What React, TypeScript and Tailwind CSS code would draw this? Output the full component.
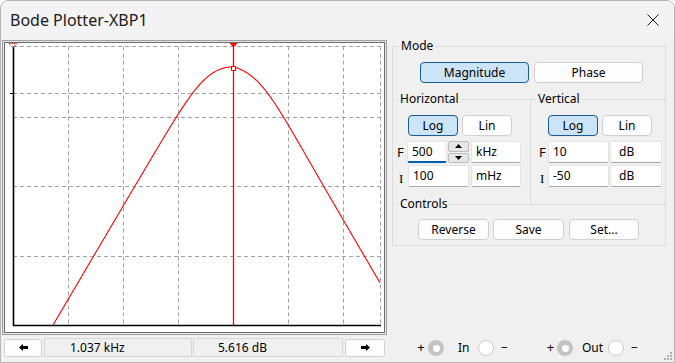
import { FC, ReactNode } from "react";

// plot geometry, in page pixels
const X_AXIS = 13;
const X_RIGHT = 380;
const Y_TOP = 46.5;
const Y_BOTTOM = 325.5;
const X_PEAK = 233;
const PX_PER_DECADE = 54.8;

const decadeLines = [68, 123, 178, 233, 288, 343, 380];
const levelLines = [46.5, 93.5, 117.5, 186.5, 256.5];

const dbToY = (db: number) => Y_TOP + ((10 - db) * (Y_BOTTOM - Y_TOP)) / 60;

// band-pass response, Q ~ 0.31, peak 5.616 dB at the cursor
const magnitudeAt = (x: number) => {
  const u = Math.pow(10, (x - X_PEAK) / PX_PER_DECADE);
  const q = 0.31;
  const r = u / q / Math.sqrt((1 - u * u) ** 2 + (u / q) ** 2);
  let db = 5.616 + 20 * Math.log10(r);
  if (x > X_PEAK) db -= 3 * Math.tanh((x - X_PEAK) / 60);
  return db;
};

const curvePoints = () => {
  const pts: string[] = [];
  for (let x = X_AXIS; x <= X_RIGHT; x += 0.5) {
    const y = dbToY(magnitudeAt(x));
    if (y <= Y_BOTTOM) pts.push(`${x.toFixed(1)},${y.toFixed(2)}`);
  }
  return pts.join(" ");
};

const BodePlot: FC = () => (
  <svg width={379} height={289} viewBox="5 43 379 289" className="block">
    {decadeLines.map((x) => (
      <line key={x} x1={x + 0.5} y1={Y_TOP} x2={x + 0.5} y2={Y_BOTTOM} stroke="#a3a3a3" strokeDasharray="4 3" />
    ))}
    {levelLines.map((y) => (
      <line key={y} x1={X_AXIS} y1={y} x2={X_RIGHT + 1} y2={y} stroke="#a3a3a3" strokeDasharray="4 3" />
    ))}

    {/* axes */}
    <line x1={X_AXIS + 0.5} y1={Y_TOP} x2={X_AXIS + 0.5} y2={Y_BOTTOM + 0.5} stroke="#000" strokeWidth={1.6} />
    <line x1={X_AXIS} y1={Y_BOTTOM} x2={X_RIGHT + 1} y2={Y_BOTTOM} stroke="#000" strokeWidth={1.6} />
    <line x1={10} y1={93.5} x2={X_AXIS} y2={93.5} stroke="#000" />

    <polyline points={curvePoints()} fill="none" stroke="#ff0000" strokeWidth={1.1} />

    {/* cursors */}
    <polygon points="9,43.5 17,43.5 13,48" fill="none" stroke="#ff0000" strokeDasharray="1.5 1" />
    <line x1={233.5} y1={43} x2={233.5} y2={Y_BOTTOM} stroke="#ff0000" strokeWidth={1.3} />
    <polygon points="229.5,43 237.5,43 233.5,47.5" fill="#ff0000" />
    <rect x={231.5} y={66.5} width={4} height={4} fill="#fff" stroke="#ff0000" />
  </svg>
);

const Arrow: FC<{ right?: boolean }> = ({ right }) => (
  <svg width={9} height={7} viewBox="0 0 9 7" className={right ? "rotate-180" : ""}>
    <path d="M0 3.5 L4 0 L4 2 L9 2 L9 5 L4 5 L4 7 Z" fill="#000" />
  </svg>
);

const ToggleButton: FC<{ active?: boolean; className?: string; children: ReactNode }> = ({
  active,
  className,
  children,
}) => (
  <button
    type="button"
    className={`h-[21px] flex items-center justify-center rounded-[4px] border text-[12px] text-black ${
      active ? "bg-[#cce4f7] border-[#1b5b98]" : "bg-[#fdfdfd] border-[#d0d0d0]"
    } ${className ?? ""}`}
  >
    {children}
  </button>
);

const Field: FC<{ value: string; focused?: boolean; className?: string }> = ({ value, focused, className }) => (
  <div
    className={`h-[22px] flex items-center bg-white rounded-[2px] border border-[#e3e3e3] text-[12px] text-black pl-[4px] ${
      focused ? "border-b-2 border-b-[#005fb8]" : "border-b-[#a9a9a9]"
    } ${className ?? ""}`}
  >
    {value}
  </div>
);

const Spinner: FC = () => (
  <div className="w-[21px] h-[22px] ml-[1px] flex flex-col gap-[1px]">
    <div className="flex-1 flex items-center justify-center bg-[#e6e6e6] border border-[#bdbdbd] rounded-[2px]">
      <svg width={7} height={4} viewBox="0 0 7 4">
        <path d="M0 4 L3.5 0 L7 4 Z" fill="#000" />
      </svg>
    </div>
    <div className="flex-1 flex items-center justify-center bg-[#e6e6e6] border border-[#bdbdbd] rounded-[2px]">
      <svg width={7} height={4} viewBox="0 0 7 4">
        <path d="M0 0 L7 0 L3.5 4 Z" fill="#000" />
      </svg>
    </div>
  </div>
);

const Terminal: FC<{ live?: boolean; className?: string }> = ({ live, className }) =>
  live ? (
    <span className={`w-[16px] h-[16px] rounded-full bg-[#c3c3c3] flex items-center justify-center ${className ?? ""}`}>
      <span className="w-[7px] h-[7px] rounded-full bg-white" />
    </span>
  ) : (
    <span className={`w-[16px] h-[16px] rounded-full bg-white border border-[#c9c9c9] ${className ?? ""}`} />
  );

const Legend: FC<{ children: ReactNode; className?: string }> = ({ children, className }) => (
  <legend className={`px-[2px] leading-[16px] text-[12px] text-black ${className ?? "ml-[5px]"}`}>{children}</legend>
);

const App: FC = () => {
  return (
    <div className="relative w-[675px] h-[363px] flex flex-col overflow-hidden bg-[#f0f0f0] border border-[#b5b5b5] rounded-t-[8px] font-['Noto_Sans',sans-serif] text-[#1a1a1a]">
      {/* Title bar */}
      <div className="h-[37px] shrink-0 flex items-center justify-between pl-[9px] pr-[15px] bg-[#f3f3f3]">
        <span className="text-[16px] text-[#1a1a1a]">Bode Plotter-XBP1</span>
        <svg width={12} height={12} viewBox="0 0 12 12">
          <path d="M0.5 0.5 L11.5 11.5 M11.5 0.5 L0.5 11.5" stroke="#1a1a1a" strokeWidth={1} />
        </svg>
      </div>

      <div className="flex flex-1 min-h-0">
        {/* Plot + readout */}
        <div className="ml-[1px] pt-[2px] w-[385px] shrink-0 flex flex-col">
          <div className="h-[295px] border border-[#a0a0a0] bg-[#e6e6e6] p-[1px]">
            <div className="w-full h-full border border-[#6b6b6b] bg-white overflow-hidden">
              <BodePlot />
            </div>
          </div>

          <div className="mt-[3px] h-[19px] flex items-center text-[12px] text-black">
            <button
              type="button"
              className="ml-[2px] w-[38px] h-[18px] flex items-center justify-center bg-[#fdfdfd] border border-[#d0d0d0] rounded-[3px]"
            >
              <Arrow />
            </button>
            <div className="ml-[2px] w-[148px] h-[19px] flex items-center pl-[25px] border border-[#d6d6d6]">1.037 kHz</div>
            <div className="ml-[1px] w-[150px] h-[19px] flex items-center pl-[24px] border border-[#d6d6d6]">5.616 dB</div>
            <button
              type="button"
              className="ml-[2px] w-[40px] h-[18px] flex items-center justify-center bg-[#fdfdfd] border border-[#d0d0d0] rounded-[3px]"
            >
              <Arrow right />
            </button>
          </div>
        </div>

        {/* Settings */}
        <div className="ml-[5px] w-[274px] shrink-0 flex flex-col">
          <fieldset className="border border-[#dcdcdc] pb-[5px]">
            <Legend className="ml-[6px]">Mode</Legend>
            <div className="mt-[8px] pl-[27px] flex gap-[5px]">
              <ToggleButton active className="w-[109px]">
                Magnitude
              </ToggleButton>
              <ToggleButton className="w-[109px]">Phase</ToggleButton>
            </div>

            <div className="mt-[8px] flex">
              <fieldset className="w-[138px] border-0 border-t border-r border-[#dcdcdc] pb-[17px]">
                <Legend>Horizontal</Legend>
                <div className="mt-[8px] pl-[15px] flex gap-[4px]">
                  <ToggleButton active className="w-[50px]">
                    Log
                  </ToggleButton>
                  <ToggleButton className="w-[50px]">Lin</ToggleButton>
                </div>
                <div className="mt-[5px] h-[22px] flex items-center">
                  <span className="w-[14px] pl-[4px] text-[13px] leading-[18px] text-black">F</span>
                  <Field value="500" focused className="w-[40px]" />
                  <Spinner />
                  <Field value="kHz" className="ml-[2px] w-[50px]" />
                </div>
                <div className="mt-[2px] h-[22px] flex items-center">
                  <span className="w-[15px] pl-[6px] self-end text-[13px] leading-[16px] text-black font-['Liberation_Serif',serif]">
                    I
                  </span>
                  <Field value="100" className="w-[61px]" />
                  <Field value="mHz" className="ml-[2px] w-[50px]" />
                </div>
              </fieldset>

              <fieldset className="flex-1 border-0 border-t border-[#dcdcdc] pb-[17px]">
                <Legend>Vertical</Legend>
                <div className="mt-[8px] pl-[17px] flex gap-[4px]">
                  <ToggleButton active className="w-[50px]">
                    Log
                  </ToggleButton>
                  <ToggleButton className="w-[50px]">Lin</ToggleButton>
                </div>
                <div className="mt-[5px] h-[22px] flex items-center">
                  <span className="w-[17px] pl-[8px] text-[13px] leading-[18px] text-black">F</span>
                  <Field value="10" className="w-[61px]" />
                  <Field value="dB" className="ml-[1px] w-[52px] pl-[8px]" />
                </div>
                <div className="mt-[2px] h-[22px] flex items-center">
                  <span className="w-[17px] pl-[9px] self-end text-[13px] leading-[16px] text-black font-['Liberation_Serif',serif]">
                    I
                  </span>
                  <Field value="-50" className="w-[61px]" />
                  <Field value="dB" className="ml-[1px] w-[52px] pl-[8px]" />
                </div>
              </fieldset>
            </div>

            <fieldset className="-mt-[8px] border-0 border-t border-[#dcdcdc]">
              <Legend>Controls</Legend>
              <div className="mt-[7px] pl-[25px] flex">
                <ToggleButton className="w-[71px]">Reverse</ToggleButton>
                <ToggleButton className="ml-[4px] w-[71px]">Save</ToggleButton>
                <ToggleButton className="ml-[5px] w-[70px]">Set...</ToggleButton>
              </div>
            </fieldset>
          </fieldset>

          {/* Terminals */}
          <div className="mt-auto mb-[6px] h-[16px] flex items-center text-[12px] text-black">
            <span className="ml-[25px] w-[8px] text-center text-[13px]">+</span>
            <Terminal live className="ml-[3px]" />
            <span className="ml-[14px] w-[11px]">In</span>
            <Terminal className="ml-[9px]" />
            <span className="ml-[6px] w-[9px] text-center">−</span>
            <span className="ml-[37px] w-[9px] text-center text-[13px]">+</span>
            <Terminal live className="ml-[2px]" />
            <span className="ml-[9px] w-[20px]">Out</span>
            <Terminal className="ml-[6px]" />
            <span className="ml-[6px] w-[9px] text-center">−</span>
          </div>
        </div>
      </div>

      {/* resize grip */}
      <svg width={12} height={10} viewBox="0 0 12 10" className="absolute right-[1px] bottom-[1px]">
        <rect x={9} y={1} width={2} height={2} fill="#b0b0b0" />
        <rect x={6} y={4} width={2} height={2} fill="#b0b0b0" />
        <rect x={9} y={4} width={2} height={2} fill="#b0b0b0" />
        <rect x={3} y={7} width={2} height={2} fill="#b0b0b0" />
        <rect x={6} y={7} width={2} height={2} fill="#b0b0b0" />
        <rect x={9} y={7} width={2} height={2} fill="#b0b0b0" />
      </svg>
    </div>
  );
};

export default App;
